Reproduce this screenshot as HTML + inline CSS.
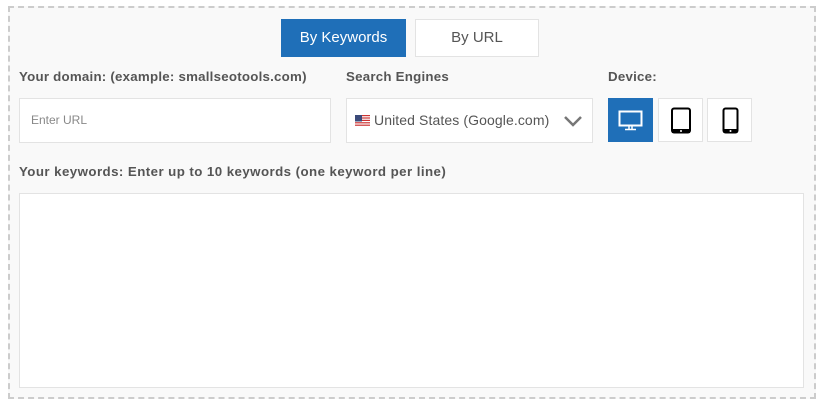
<!DOCTYPE html>
<html><head><style>
body{margin:0;width:822px;height:404px;background:#fff;font-family:"Liberation Sans",sans-serif;position:relative;overflow:hidden}
.box{position:absolute;left:8px;top:6px;width:804px;height:389px;border:2px dashed #ccc;background:#f9f9f9}
.a{position:absolute;box-sizing:border-box}
.lbl{position:absolute;font-size:13.3px;color:#555;font-weight:bold;letter-spacing:0.23px}
.field{background:#fff;border:1px solid #e3e3e3}
.dev{background:#fff;border:1px solid #e3e3e3;width:45px;height:44px;top:98px}
</style></head><body>
<div class="box"></div>
<div class="a" style="left:281px;top:19px;width:125px;height:38px;background:#1f6fb8;color:#fff;font-size:15px;text-align:center;line-height:38px">By Keywords</div>
<div class="a field" style="left:415px;top:19px;width:124px;height:38px;color:#555;font-size:15px;text-align:center;line-height:36px">By URL</div>
<div class="lbl" style="left:19px;top:69px">Your domain: (example: smallseotools.com)</div>
<div class="lbl" style="left:346px;top:69px">Search Engines</div>
<div class="lbl" style="left:608px;top:69px">Device:</div>
<div class="a field" style="left:19px;top:98px;width:312px;height:45px;font-size:12px;color:#888;padding-left:11px;line-height:43px">Enter URL</div>
<div class="a field" style="left:346px;top:98px;width:247px;height:45px;font-size:14px;color:#555;line-height:43px;padding-left:27px;letter-spacing:0.1px">United States (Google.com)
<svg style="position:absolute;left:8px;top:16px" width="15" height="12" viewBox="0 0 15 12"><rect width="15" height="12" fill="#fff"/><g fill="#c33"><rect y="0" width="15" height="1.2"/><rect y="2.4" width="15" height="1.2"/><rect y="4.8" width="15" height="1.2"/><rect y="7.2" width="15" height="1.2"/><rect y="9.6" width="15" height="1.2"/></g><rect width="7" height="6.5" fill="#3b4a7a"/></svg>
<svg style="position:absolute;left:217px;top:17px" width="18" height="11"><path d="M1 1l8 8 8-8" fill="none" stroke="#777" stroke-width="2.5"/></svg></div>
<div class="a" style="left:608px;top:98px;width:45px;height:44px;background:#1f6fb8"><svg width="45" height="44"><rect x="11.5" y="13.5" width="22" height="14" fill="none" stroke="#fff" stroke-width="2"/><path d="M21 28v3M24 28v3M17 31.5h11" stroke="#fff" stroke-width="1.5" fill="none"/></svg></div>
<div class="a dev" style="left:658px"><svg width="45" height="44"><rect x="13" y="9.5" width="18" height="24" rx="2" fill="none" stroke="#000" stroke-width="2"/><rect x="13" y="30" width="18" height="4" fill="#000"/><circle cx="22" cy="32" r="1" fill="#fff"/></svg></div>
<div class="a dev" style="left:707px"><svg width="45" height="44"><rect x="15.5" y="9.5" width="14" height="24" rx="2" fill="none" stroke="#000" stroke-width="2"/><rect x="15.5" y="30" width="14" height="4" fill="#000"/><circle cx="22.5" cy="32" r="1" fill="#fff"/></svg></div>
<div class="lbl" style="left:19px;top:164px;letter-spacing:0.43px">Your keywords: Enter up to 10 keywords (one keyword per line)</div>
<div class="a field" style="left:19px;top:193px;width:785px;height:195px"></div>
</body></html>
